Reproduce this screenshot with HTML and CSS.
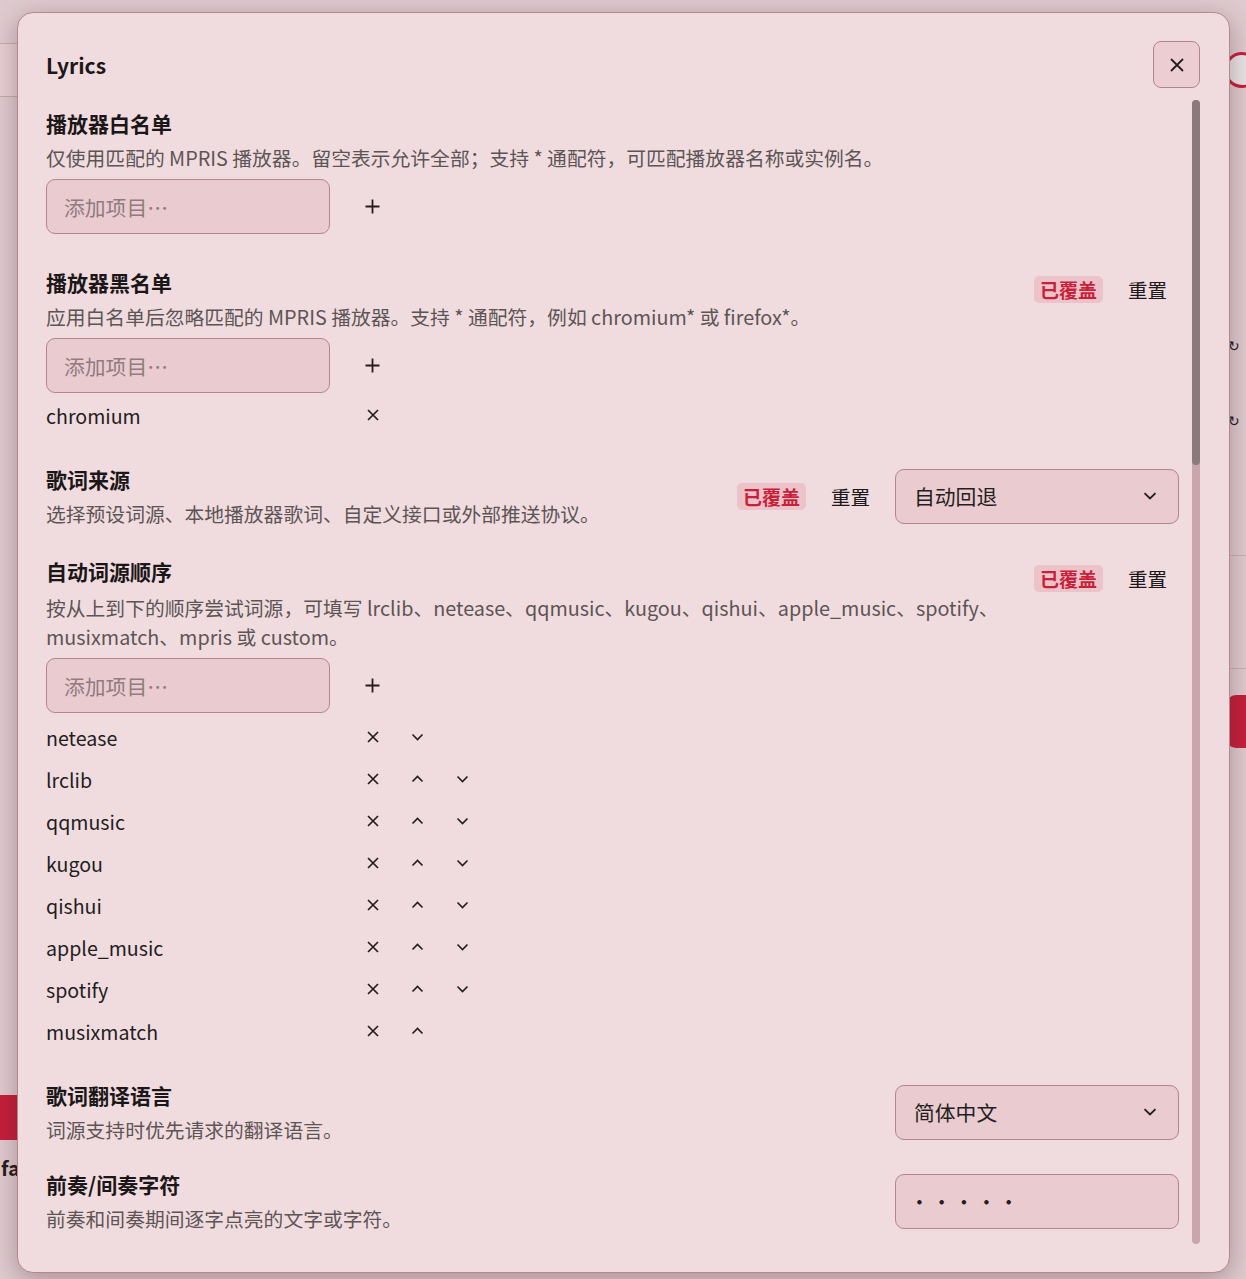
FILE: index.html
```html
<!DOCTYPE html>
<html lang="zh-CN">
<head>
    <meta charset="utf-8">
    <title>Lyrics</title>
    <link rel="stylesheet" href="styles.css">
</head>
<body>
    <div class="page">
        <div class="page-left">
            <div class="bg-field"></div>
            <div class="bg-danger"></div>
            <div class="bg-label">fa</div>
        </div>
        <div class="page-right">
            <div class="bg-ring"></div>
            <div class="bg-icon">&#8635;</div>
            <div class="bg-icon bg-icon-2">&#8635;</div>
            <div class="bg-line"></div>
            <div class="bg-line bg-line-2"></div>
            <div class="bg-danger-right"></div>
        </div>
    </div>

    <div class="dialog">
        <div class="dialog-header">
            <h1 class="dialog-title">Lyrics</h1>
            <button class="close-btn" aria-label="关闭">
                <svg width="14" height="14" viewBox="0 0 14 14"><path d="M1 1L13 13M13 1L1 13" stroke="#231d1e" stroke-width="1.8" fill="none"/></svg>
            </button>
        </div>

        <div class="dialog-body">
            <div class="content">

                <div class="field">
                    <div class="field-head">
                        <div class="field-text">
                            <div class="field-title">播放器白名单</div>
                            <div class="field-desc">仅使用匹配的 MPRIS 播放器。留空表示允许全部；支持 * 通配符，可匹配播放器名称或实例名。</div>
                        </div>
                    </div>
                    <div class="field-controls">
                        <div class="add-row">
                            <input class="text-input" placeholder="添加项目…">
                            <button class="icon-btn"><svg width="15" height="15" viewBox="0 0 15 15"><path d="M7.5 0.5v14M0.5 7.5h14" stroke="#231d1e" stroke-width="1.8" fill="none"/></svg></button>
                        </div>
                    </div>
                </div>

                <div class="field">
                    <div class="field-head">
                        <div class="field-text">
                            <div class="field-title">播放器黑名单</div>
                            <div class="field-desc">应用白名单后忽略匹配的 MPRIS 播放器。支持 * 通配符，例如 chromium* 或 firefox*。</div>
                        </div>
                        <div class="actions">
                            <span class="badge">已覆盖</span>
                            <button class="reset-btn">重置</button>
                        </div>
                    </div>
                    <div class="field-controls">
                        <div class="add-row">
                            <input class="text-input" placeholder="添加项目…">
                            <button class="icon-btn"><svg width="15" height="15" viewBox="0 0 15 15"><path d="M7.5 0.5v14M0.5 7.5h14" stroke="#231d1e" stroke-width="1.8" fill="none"/></svg></button>
                        </div>
                        <div class="item-list">
                            <div class="item">
                                <span class="item-name">chromium</span>
                                <button class="icon-btn"><svg width="12" height="12" viewBox="0 0 12 12"><path d="M1 1L11 11M11 1L1 11" stroke="#231d1e" stroke-width="1.7" fill="none"/></svg></button>
                            </div>
                        </div>
                    </div>
                </div>

                <div class="field">
                    <div class="field-head centered">
                        <div class="field-text">
                            <div class="field-title">歌词来源</div>
                            <div class="field-desc">选择预设词源、本地播放器歌词、自定义接口或外部推送协议。</div>
                        </div>
                        <div class="actions">
                            <span class="badge">已覆盖</span>
                            <button class="reset-btn">重置</button>
                            <div class="select">
                                <span>自动回退</span>
                                <svg width="14" height="8" viewBox="0 0 14 8"><path d="M1.5 1.2l5.5 5.3 5.5-5.3" stroke="#231d1e" stroke-width="1.8" fill="none"/></svg>
                            </div>
                        </div>
                    </div>
                </div>

                <div class="field">
                    <div class="field-head">
                        <div class="field-text">
                            <div class="field-title">自动词源顺序</div>
                            <div class="field-desc wide-gap">按从上到下的顺序尝试词源，可填写 lrclib、netease、qqmusic、kugou、qishui、apple_music、spotify、musixmatch、mpris 或 custom。</div>
                        </div>
                        <div class="actions">
                            <span class="badge">已覆盖</span>
                            <button class="reset-btn">重置</button>
                        </div>
                    </div>
                    <div class="field-controls">
                        <div class="add-row">
                            <input class="text-input" placeholder="添加项目…">
                            <button class="icon-btn"><svg width="15" height="15" viewBox="0 0 15 15"><path d="M7.5 0.5v14M0.5 7.5h14" stroke="#231d1e" stroke-width="1.8" fill="none"/></svg></button>
                        </div>
                        <div class="item-list spaced" id="sourceList"></div>
                    </div>
                </div>

                <div class="field">
                    <div class="field-head centered">
                        <div class="field-text">
                            <div class="field-title">歌词翻译语言</div>
                            <div class="field-desc">词源支持时优先请求的翻译语言。</div>
                        </div>
                        <div class="actions">
                            <div class="select">
                                <span>简体中文</span>
                                <svg width="14" height="8" viewBox="0 0 14 8"><path d="M1.5 1.2l5.5 5.3 5.5-5.3" stroke="#231d1e" stroke-width="1.8" fill="none"/></svg>
                            </div>
                        </div>
                    </div>
                </div>

                <div class="field tight">
                    <div class="field-head centered">
                        <div class="field-text">
                            <div class="field-title">前奏/间奏字符</div>
                            <div class="field-desc">前奏和间奏期间逐字点亮的文字或字符。</div>
                        </div>
                        <div class="actions">
                            <input class="text-input value-input" value="•••••">
                        </div>
                    </div>
                </div>

            </div>
            <div class="scrollbar"><div class="scroll-thumb"></div></div>
        </div>
    </div>

    <script>
        const sources = ['netease', 'lrclib', 'qqmusic', 'kugou', 'qishui', 'apple_music', 'spotify', 'musixmatch'];
        const removeIcon = '<svg width="12" height="12" viewBox="0 0 12 12"><path d="M1 1L11 11M11 1L1 11" stroke="#231d1e" stroke-width="1.7" fill="none"/></svg>';
        const upIcon = '<svg width="13" height="8" viewBox="0 0 13 8"><path d="M1.5 6.5l5-5 5 5" stroke="#231d1e" stroke-width="1.6" fill="none"/></svg>';
        const downIcon = '<svg width="13" height="8" viewBox="0 0 13 8"><path d="M1.5 1.5l5 5 5-5" stroke="#231d1e" stroke-width="1.6" fill="none"/></svg>';

        const list = document.getElementById('sourceList');
        sources.forEach(function (name, i) {
            let html = '<span class="item-name">' + name + '</span>';
            html += '<button class="icon-btn">' + removeIcon + '</button>';
            if (i > 0) {
                html += '<button class="icon-btn">' + upIcon + '</button>';
            }
            if (i < sources.length - 1) {
                html += '<button class="icon-btn">' + downIcon + '</button>';
            }
            const row = document.createElement('div');
            row.className = 'item';
            row.innerHTML = html;
            list.appendChild(row);
        });
    </script>
</body>
</html>
```

FILE: styles.css
```css
html, body {
    margin: 0;
    padding: 0;
}
body {
    width: 1246px;
    height: 1279px;
    overflow: hidden;
    background-color: #dfcbcf;
    font-family: "Noto Sans CJK SC", "Noto Sans", sans-serif;
    color: #231d1e;
}

/* page behind the dialog */
.page {
    display: flex;
    justify-content: space-between;
    height: 100%;
}
.page-left {
    width: 60px;
}
.bg-field {
    margin-top: 43px;
    height: 52px;
    border-top: 1px solid #c8a9ae;
    border-bottom: 1px solid #c8a9ae;
    background-color: #e6d0d4;
}
.bg-danger {
    margin-top: 998px;
    height: 45px;
    background-color: #c41f3b;
}
.bg-label {
    margin-top: 14px;
    padding-left: 1px;
    font-size: 20px;
    font-weight: 700;
    line-height: 28px;
}
.page-right {
    width: 30px;
}
.bg-ring {
    margin: 52px 0 0 8px;
    width: 30px;
    height: 30px;
    border: 3px solid #c41f3b;
    border-radius: 50%;
    background-color: #e9e4e5;
}
.bg-icon {
    margin: 249px 0 0 12px;
    font-size: 14px;
    line-height: 16px;
}
.bg-icon-2 {
    margin-top: 59px;
}
.bg-line {
    margin-top: 127px;
    border-top: 1px solid #cbb1b5;
}
.bg-line-2 {
    margin-top: 112px;
}
.bg-danger-right {
    margin: 26px 0 0 10px;
    height: 53px;
    border-radius: 10px 0 0 10px;
    background-color: #c41f3b;
}

/* dialog */
.dialog {
    position: absolute;
    left: 17px;
    top: 12px;
    width: 1213px;
    height: 1261px;
    box-sizing: border-box;
    padding: 28px 29px 28px 28px;
    display: flex;
    flex-direction: column;
    background-color: #f0dcdf;
    border: 1px solid #b4888f;
    border-radius: 16px;
    box-shadow: 0 6px 26px rgba(70, 30, 40, 0.35);
}
.dialog-header {
    display: flex;
    align-items: center;
    justify-content: space-between;
    height: 47px;
}
.dialog-title {
    margin: 0;
    font-size: 21px;
    font-weight: 700;
    line-height: 30px;
    color: #1c1718;
}
.close-btn {
    width: 47px;
    height: 47px;
    box-sizing: border-box;
    display: flex;
    align-items: center;
    justify-content: center;
    padding: 0;
    background-color: #ebcdd2;
    border: 1.5px solid #b3858d;
    border-radius: 8px;
}
.dialog-body {
    flex: 1;
    min-height: 0;
    display: flex;
    margin-top: 12px;
}
.content {
    flex: 1;
    min-width: 0;
    overflow: hidden;
    padding: 8px 13px 0 0;
}
.scrollbar {
    width: 8px;
    border-radius: 4px;
    background-color: #c8a6ab;
}
.scroll-thumb {
    height: 365px;
    border-radius: 4px;
    background-color: #8b7a7d;
}

/* fields */
.field + .field {
    margin-top: 28px;
}
.field + .field.tight {
    margin-top: 25px;
}
.field-head {
    display: flex;
    align-items: flex-start;
    justify-content: space-between;
    gap: 32px;
}
.field-head.centered {
    align-items: center;
}
.field-text {
    flex: 1;
    min-width: 0;
}
.field-title {
    font-size: 21px;
    font-weight: 700;
    line-height: 30px;
    color: #1b1617;
}
.field-desc {
    margin-top: 5px;
    font-size: 19.8px;
    line-height: 29px;
    color: #5d5456;
}
.field-desc.wide-gap {
    margin-top: 7px;
}
.actions {
    display: flex;
    align-items: center;
    gap: 13px;
    flex-shrink: 0;
}
.badge {
    padding: 1px 6px;
    font-size: 19px;
    font-weight: 700;
    line-height: 25px;
    color: #c81f3b;
    background-color: #ecc3c9;
    border-radius: 5px;
}
.reset-btn {
    height: 44px;
    padding: 0 12px;
    font-family: inherit;
    font-size: 19.5px;
    color: #1d1819;
    background: transparent;
    border: none;
}
.select {
    width: 284px;
    height: 55px;
    box-sizing: border-box;
    display: flex;
    align-items: center;
    justify-content: space-between;
    padding: 0 21px 0 18px;
    font-size: 20.8px;
    color: #241e1f;
    background-color: #eacbd0;
    border: 1.5px solid #b3858d;
    border-radius: 9px;
}

/* list editors */
.field-controls {
    padding-bottom: 5px;
}
.add-row {
    display: flex;
    align-items: center;
    gap: 20px;
    margin-top: 7px;
}
.text-input {
    width: 284px;
    height: 55px;
    box-sizing: border-box;
    padding: 0 17px;
    font-family: inherit;
    font-size: 20.8px;
    color: #241e1f;
    background-color: #eacbd0;
    border: 1.5px solid #b3858d;
    border-radius: 9px;
    outline: none;
}
.text-input::placeholder {
    color: #8e7c7f;
}
.value-input {
    padding-left: 13px;
    letter-spacing: 1.5px;
}
.icon-btn {
    width: 45px;
    height: 32px;
    display: flex;
    align-items: center;
    justify-content: center;
    padding: 0;
    background: transparent;
    border: none;
}
.item-list {
    display: flex;
    flex-direction: column;
    gap: 10px;
    margin-top: 6px;
}
.item-list.spaced {
    margin-top: 8px;
}
.item {
    display: flex;
    align-items: center;
    height: 32px;
}
.item-name {
    width: 304px;
    font-size: 19.6px;
    color: #231d1e;
}
```
